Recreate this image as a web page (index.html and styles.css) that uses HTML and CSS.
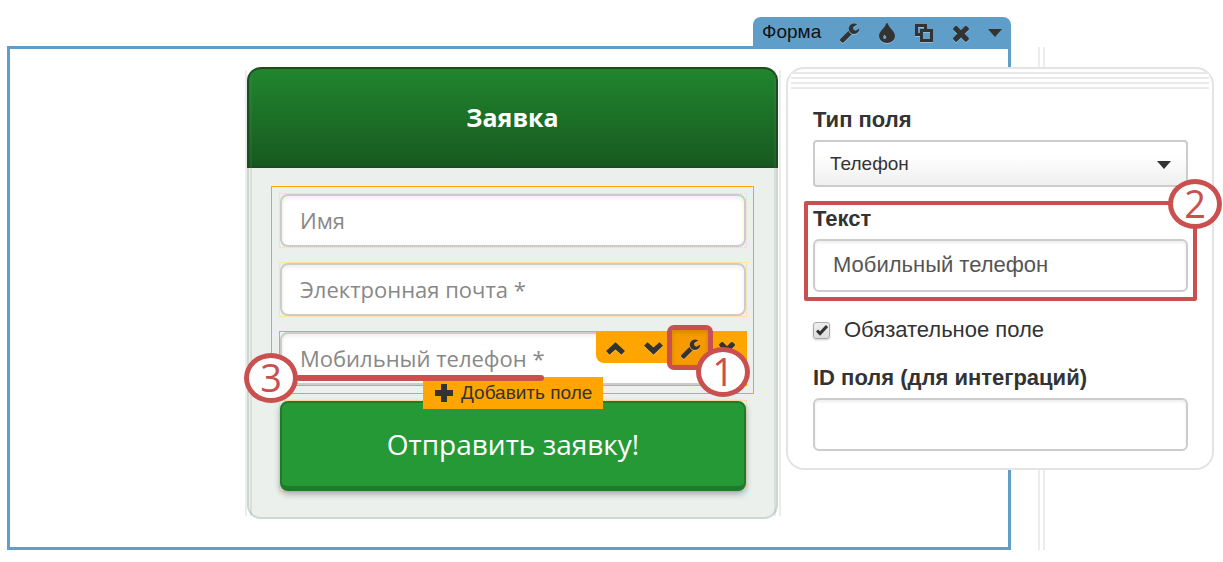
FILE: index.html
```html
<!DOCTYPE html>
<html lang="ru">
<head>
  <meta charset="UTF-8" />
  <meta name="viewport" content="width=device-width, initial-scale=1.0"/>
  <title>Редактор формы</title>
  <link rel="stylesheet" href="styles.css">
</head>
<body>
  <!-- Icons -->
  <svg class="sprite" aria-hidden="true">
    <symbol id="wrench" viewBox="0 0 1792 1792"><path d="M1092 1052l-682 682q-37 37-90 37-52 0-91-37l-106-108q-38-36-38-90 0-53 38-91l681-681q39 98 114.5 173.5t173.5 114.5zm634-435q0 39-23 106-47 134-164.5 217.5t-258.5 83.5q-185 0-316.5-131.5t-131.5-316.5 131.5-316.5 316.5-131.5q58 0 121.5 16.5t107.5 46.5q16 11 16 28t-16 28l-293 169v224l193 107q5-3 79-48.5t135.5-81 70.5-35.5q15 0 23.5 10t8.5 25z"/></symbol>
    <symbol id="times" viewBox="0 0 1792 1792"><path d="M1490 1322q0 40-28 68l-136 136q-28 28-68 28t-68-28l-294-294-294 294q-28 28-68 28t-68-28l-136-136q-28-28-28-68t28-68l294-294-294-294q-28-28-28-68t28-68l136-136q28-28 68-28t68 28l294 294 294-294q28-28 68-28t68 28l136 136q28 28 28 68t-28 68l-294 294 294 294q28 28 28 68z"/></symbol>
    <symbol id="drop" viewBox="0 0 20 20"><path fill-rule="evenodd" d="M10 0c.5 0 .8.3 1 1 1.300 4.500 7 7 7 12a8 7 0 0 1-16 0c0-5 5.700-7.500 7-12 .2-.7.5-1 1-1zM9.300 14.500c0-1-1.200-1.700-1.600-3-.8 1.200-1.500 2-1.500 3a1.550 1.550 0 0 0 3.100 0z"/></symbol>
    <symbol id="copy" viewBox="0 0 18 18"><path fill="none" stroke="currentColor" stroke-width="3" d="M6 10.500H1.500v-9h9V6M6.500 6.500h10v10h-10z"/></symbol>
    <symbol id="up" viewBox="0 0 20 20"><path d="M10 4l9 8.500-3.300 3.500L10 11l-5.700 5L1 12.500z"/></symbol>
    <symbol id="down" viewBox="0 0 20 20"><path d="M10 16l9-8.500L15.700 4 10 9 4.300 4 1 7.500z"/></symbol>
    <symbol id="plus" viewBox="0 0 18 18"><path d="M6 0h6v6h6v6h-6v6H6v-6H0V6h6z"/></symbol>
    <symbol id="caret" viewBox="0 0 14 8"><path d="M0 0h14L7 8z"/></symbol>
    <symbol id="check" viewBox="0 0 12 12"><path fill="none" stroke="currentColor" stroke-width="3" d="M1 6.500l3 3L11 2"/></symbol>
  </svg>

  <div class="editor">
    <div class="block">
      <div class="block-bar">
        <span class="block-name">Форма</span>
        <button type="button" aria-label="Настройки"><svg class="icon"><use href="#wrench"/></svg></button>
        <button type="button" aria-label="Цвет"><svg class="icon icon-drop"><use href="#drop"/></svg></button>
        <button type="button" aria-label="Копировать"><svg class="icon icon-copy"><use href="#copy"/></svg></button>
        <button type="button" aria-label="Удалить"><svg class="icon icon-times"><use href="#times"/></svg></button>
        <button type="button" aria-label="Ещё"><svg class="caret"><use href="#caret"/></svg></button>
      </div>

      <div class="block-body">
        <form class="order">
          <h1>Заявка</h1>
          <div class="order-body">
            <div class="fields">
              <div class="field"><input type="text" placeholder="Имя" aria-label="Имя"></div>
              <div class="field"><input type="text" placeholder="Электронная почта *" aria-label="Электронная почта"></div>
              <div class="field field-active">
                <input type="tel" placeholder="Мобильный телефон *" aria-label="Мобильный телефон">
                <div class="field-bar">
                  <button type="button" aria-label="Выше"><svg class="icon"><use href="#up"/></svg></button>
                  <button type="button" aria-label="Ниже"><svg class="icon"><use href="#down"/></svg></button>
                  <button type="button" class="pressed" aria-label="Настроить поле"><svg class="icon"><use href="#wrench"/></svg></button>
                  <button type="button" aria-label="Удалить поле"><svg class="icon icon-times"><use href="#times"/></svg></button>
                </div>
                <span class="underline"></span>
                <span class="marker marker-1">1</span>
                <span class="marker marker-3">3</span>
              </div>
              <button type="button" class="add-field"><svg class="plus"><use href="#plus"/></svg>Добавить поле</button>
            </div>
            <div class="field">
              <button type="submit" class="send">Отправить заявку!</button>
            </div>
          </div>
        </form>
      </div>
    </div>

    <div class="ruler"></div>

    <!-- Field settings -->
    <div class="panel">
      <div class="grip"></div>
      <div class="row">
        <label for="fieldType">Тип поля</label>
        <div class="select">
          <select id="fieldType">
            <option>Телефон</option>
            <option>Текст</option>
            <option>Почта</option>
          </select>
          <svg class="caret"><use href="#caret"/></svg>
        </div>
      </div>
      <div class="row row-marked">
        <label for="fieldText">Текст</label>
        <input type="text" id="fieldText" value="Мобильный телефон">
        <span class="marker marker-2">2</span>
      </div>
      <label class="check" for="required">
        <input type="checkbox" id="required" checked>
        <svg class="tick"><use href="#check"/></svg>
        Обязательное поле
      </label>
      <div class="row">
        <label for="fieldId">ID поля (для интеграций)</label>
        <input type="text" id="fieldId">
      </div>
    </div>
  </div>
</body>
</html>
```

FILE: styles.css
```css
* {
  box-sizing: border-box;
}

body {
  margin: 0;
  background-color: #fff;
  color: #333;
  font-family: "Liberation Sans", Arial, sans-serif;
}

button, input, select {
  font-family: inherit;
  color: inherit;
}

button {
  border: none;
  padding: 0;
  background: none;
  cursor: pointer;
}

.sprite {
  display: none;
}

.icon {
  flex: none;
  width: 21px;
  height: 21px;
  fill: currentColor;
  filter: drop-shadow(0 1px 0 rgba(255, 255, 255, 0.3));
}

.icon-drop {
  width: 20px;
  height: 20px;
}

.icon-copy {
  width: 18px;
  height: 18px;
}

.icon-times {
  width: 24px;
  height: 24px;
}

.caret {
  width: 14px;
  height: 8px;
  fill: #333;
}

.editor {
  position: relative;
  display: flex;
  gap: 27px;
  padding: 17px 178px 12px 7px;
}

/* Block frame */
.block {
  flex: 1;
  display: flex;
  flex-direction: column;
}

.block-bar {
  align-self: flex-end;
  display: flex;
  align-items: center;
  height: 29px;
  padding: 2px 0 0 9px;
  background-color: #5f9ec9;
  border-radius: 8px 8px 0 0;
}

.block-name {
  width: 69px;
  padding-bottom: 2px;
  color: #111;
  font-size: 19px;
}

.block-bar button {
  display: flex;
  align-items: center;
  justify-content: center;
  width: 37px;
  height: 29px;
}

.block-bar button:last-child {
  width: 32px;
}

.block-body {
  display: flex;
  justify-content: center;
  padding: 18px 0 28px 7px;
  border: 3px solid #5f9ec9;
}

.ruler {
  margin-top: 30px;
  border-left: 7px double #ececec;
}

/* Order form */
.order {
  position: relative;
  width: 531px;
}

.order::after {
  content: "";
  position: absolute;
  top: 3px;
  bottom: 3px;
  left: -2px;
  right: -3px;
  border: 7px double rgba(120, 130, 125, 0.15);
  border-width: 0 7px;
  pointer-events: none;
}

h1 {
  display: flex;
  align-items: center;
  justify-content: center;
  height: 101px;
  margin: 0;
  padding-bottom: 2px;
  border: 2px solid #174f1f;
  border-radius: 14px 14px 0 0;
  background: linear-gradient(#20862e, #17591f);
  color: #fff;
  font: bold 25px "Open Sans", sans-serif;
}

.order-body {
  padding: 18px 22px 25px;
  border: 2px solid #ccd9d0;
  border-top: none;
  border-radius: 0 0 14px 14px;
  background-color: #ebf0ed;
}

.fields {
  position: relative;
  z-index: 1;
  display: flex;
  flex-direction: column;
  gap: 14px;
  margin-bottom: 6px;
  padding: 6px 6px 7px 7px;
  border: 1px solid #ffa500;
}

.field {
  position: relative;
  border: 1px dotted #f8d999;
}

.order-body > .field {
  margin: 0 7px 0 8px;
}

.field-active {
  border: 1px solid #ffa500;
}

.field input {
  display: block;
  width: 100%;
  height: 53px;
  padding: 0 18px 2px;
  border: 2px solid #ccc;
  border-radius: 8px;
  background-color: #fff;
  box-shadow: inset 0 2px 4px rgba(0, 0, 0, 0.08);
  font: 22px "Open Sans", sans-serif;
}

.field input::placeholder {
  color: #888;
}

.field-bar {
  position: absolute;
  top: 0;
  right: 0;
  display: flex;
  width: 150px;
  height: 31px;
  border-radius: 0 0 0 8px;
  background-color: #ffa500;
}

.field-bar button {
  display: flex;
  flex: 1;
  align-items: center;
  justify-content: center;
  padding-top: 2px;
}

.field-bar .pressed {
  flex: none;
  width: 36px;
  height: 35px;
  margin-top: -2px;
  background-color: #f59a00;
  box-shadow: inset 0 2px 4px rgba(0, 0, 0, 0.15);
  outline: 5px solid #c9504f;
  border-radius: 2px;
}

.add-field {
  position: absolute;
  z-index: 1;
  top: 190px;
  left: 151px;
  display: flex;
  align-items: center;
  gap: 8px;
  height: 32px;
  padding: 0 11px 0 12px;
  background-color: #ffa500;
  font-size: 19px;
}

.plus {
  width: 18px;
  height: 18px;
  fill: currentColor;
}

.send {
  display: block;
  width: 100%;
  height: 90px;
  padding-bottom: 2px;
  border: 2px solid #1f7a2c;
  border-bottom-width: 5px;
  border-radius: 8px;
  background-color: #269937;
  box-shadow: 0 3px 6px rgba(0, 0, 0, 0.3);
  color: #fff;
  font: 28px "Open Sans", sans-serif;
}

/* Step markers */
.marker {
  position: absolute;
  z-index: 2;
  display: flex;
  align-items: center;
  justify-content: center;
  width: 54px;
  height: 50px;
  padding-bottom: 2px;
  border: 5px solid #c9504f;
  border-radius: 50%;
  background-color: #fff;
  color: #c9504f;
  font: 38px "Open Sans", sans-serif;
}

.marker-1 {
  top: 15px;
  right: -4px;
}

.marker-2 {
  top: -26px;
  right: -29px;
}

.marker-3 {
  top: 21px;
  left: -36px;
}

.underline {
  position: absolute;
  z-index: 2;
  top: 43px;
  left: 16px;
  width: 248px;
  height: 6px;
  border-radius: 3px;
  background-color: #c9504f;
}

/* Settings panel */
.panel {
  position: absolute;
  top: 67px;
  right: 9px;
  width: 428px;
  padding: 3px 3px 17px;
  border: 2px solid #e4e4e4;
  border-radius: 18px;
  background-color: #fff;
}

.grip {
  height: 17px;
  margin-bottom: 14px;
  background: repeating-linear-gradient(#e9e9e9 0 2px, #fff 2px 5px);
}

.row {
  position: relative;
  margin: 0 12px 0 13px;
  padding: 0 9px;
}

.row label {
  display: block;
  height: 37px;
  font-size: 22px;
  font-weight: bold;
  line-height: 34px;
}

.row input {
  display: block;
  width: 100%;
  height: 53px;
  padding: 0 18px 2px;
  border: 2px solid #ccc;
  border-radius: 6px;
  background-color: #fff;
  box-shadow: inset 0 2px 3px rgba(0, 0, 0, 0.07);
  color: #555;
  font-size: 22px;
}

.select {
  position: relative;
}

.select select {
  display: block;
  width: 100%;
  height: 47px;
  padding: 0 15px;
  border: 2px solid #ccc;
  border-radius: 4px;
  background: linear-gradient(#fff 30%, #efefef);
  appearance: none;
  font-size: 19px;
}

.select .caret {
  position: absolute;
  top: 21px;
  right: 17px;
  pointer-events: none;
}

.row-marked {
  margin-top: 14px;
  padding: 0 5px 5px;
  border: 4px solid #c9504f;
  border-radius: 2px;
}

.row-marked label {
  height: 34px;
  line-height: 28px;
}

.check {
  position: relative;
  display: flex;
  align-items: center;
  gap: 14px;
  margin: 13px 22px 15px;
  font-size: 22px;
  line-height: 32px;
}

.check input {
  width: 17px;
  height: 17px;
  margin: 0;
  border: 1px solid #aaa;
  border-radius: 3px;
  background: linear-gradient(#eee, #ddd);
  box-shadow: 0 1px 2px rgba(0, 0, 0, 0.2);
  appearance: none;
}

.tick {
  position: absolute;
  top: 10px;
  left: 3px;
  width: 12px;
  height: 12px;
  pointer-events: none;
}

.check input:not(:checked) + .tick {
  display: none;
}
```
